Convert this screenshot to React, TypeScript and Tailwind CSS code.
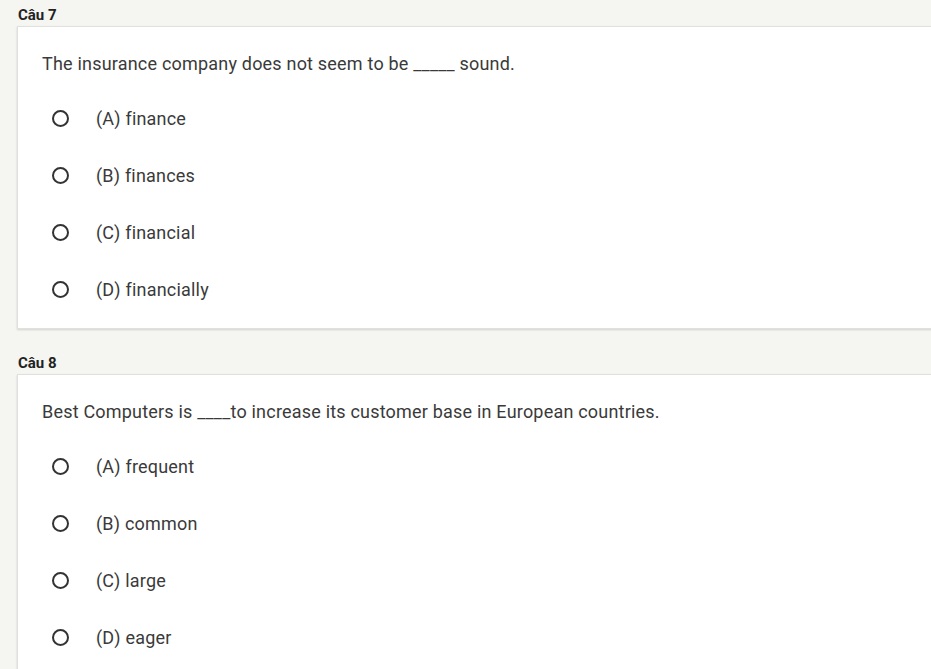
const questions = [
  {
    label: "Câu 7",
    text: "The insurance company does not seem to be _____ sound.",
    options: ["(A) finance", "(B) finances", "(C) financial", "(D) financially"],
  },
  {
    label: "Câu 8",
    text: "Best Computers is ____to increase its customer base in European countries.",
    options: ["(A) frequent", "(B) common", "(C) large", "(D) eager"],
  },
];

function Radio() {
  return <span className="block w-[17px] h-[17px] rounded-full border-2 border-[#333]" />;
}

export default function App() {
  return (
    <div
      className="min-h-[669px] h-[669px] overflow-hidden bg-[#f5f5f1] pl-[17px] text-[#3a3a3a]"
      style={{ fontFamily: "Roboto, 'Liberation Sans', sans-serif" }}
    >
      {questions.map((q, i) => (
        <section key={q.label} className={i === 0 ? "pt-[4px]" : "pt-[23px]"}>
          <h2 className="text-[15px] font-bold leading-[22px] pl-[1px] text-[#222]">{q.label}</h2>
          <div className="w-[940px] bg-white border border-[#e0e0dc] shadow-[0_1px_2px_rgba(0,0,0,0.15)] pt-[25px] pb-[10px] pl-[24px]">
            <p className="text-[18px] leading-[24px] tracking-[0.2px]">{q.text}</p>
            <div className="mt-[14px]">
              {q.options.map((opt) => (
                <div key={opt} className="flex items-center h-[57px]">
                  <div className="w-[54px] pl-[10px]">
                    <Radio />
                  </div>
                  <span className="text-[18px] tracking-[0.2px]">{opt}</span>
                </div>
              ))}
            </div>
          </div>
        </section>
      ))}
    </div>
  );
}
